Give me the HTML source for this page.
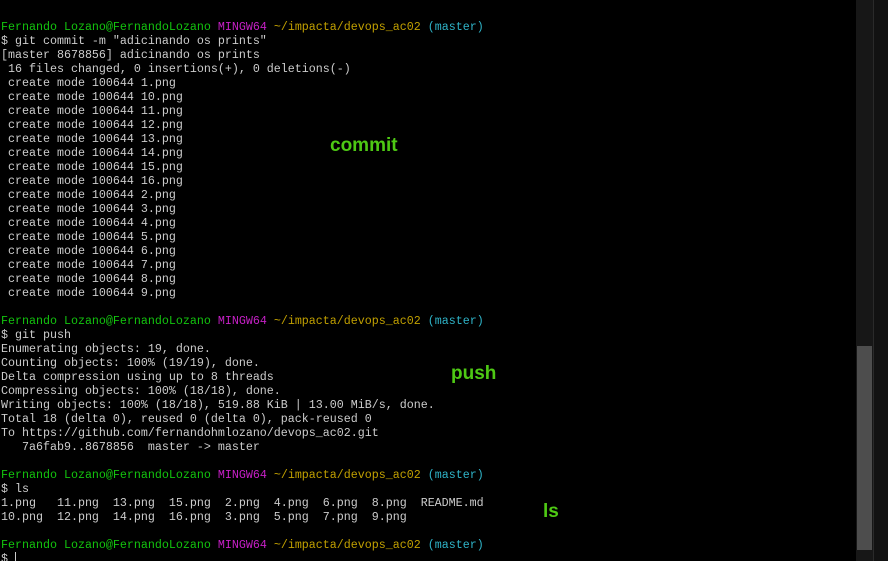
<!DOCTYPE html>
<html><head><meta charset="utf-8"><style>
html,body{margin:0;padding:0;background:#000;width:888px;height:561px;overflow:hidden;position:relative}
pre{position:absolute;left:1px;top:20px;margin:0;font-family:"Liberation Mono",monospace;font-size:11.67px;line-height:14px;color:#cccccc;white-space:pre}
.g{color:#13c40e}.m{color:#c620c6}.y{color:#c1a000}.c{color:#2fb4c8}
.lbl{position:absolute;font-family:"Liberation Sans",sans-serif;font-weight:bold;font-size:19px;color:#4ec914}
.sb{position:absolute;left:856px;top:0;width:17px;height:561px;background:#171717}
.th{position:absolute;left:857px;top:346px;width:15px;height:204px;background:#4d4d4d}
.rs{position:absolute;left:873px;top:0;width:1px;height:561px;background:#2a2a2a}
.rr{position:absolute;left:874px;top:0;width:14px;height:561px;background:#121212}
</style></head><body>
<pre><span class="g">Fernando Lozano@FernandoLozano</span> <span class="m">MINGW64</span> <span class="y">~/impacta/devops_ac02</span> <span class="c">(master)</span>
$ git commit -m "adicinando os prints"
[master 8678856] adicinando os prints
 16 files changed, 0 insertions(+), 0 deletions(-)
 create mode 100644 1.png
 create mode 100644 10.png
 create mode 100644 11.png
 create mode 100644 12.png
 create mode 100644 13.png
 create mode 100644 14.png
 create mode 100644 15.png
 create mode 100644 16.png
 create mode 100644 2.png
 create mode 100644 3.png
 create mode 100644 4.png
 create mode 100644 5.png
 create mode 100644 6.png
 create mode 100644 7.png
 create mode 100644 8.png
 create mode 100644 9.png

<span class="g">Fernando Lozano@FernandoLozano</span> <span class="m">MINGW64</span> <span class="y">~/impacta/devops_ac02</span> <span class="c">(master)</span>
$ git push
Enumerating objects: 19, done.
Counting objects: 100% (19/19), done.
Delta compression using up to 8 threads
Compressing objects: 100% (18/18), done.
Writing objects: 100% (18/18), 519.88 KiB | 13.00 MiB/s, done.
Total 18 (delta 0), reused 0 (delta 0), pack-reused 0
To https://github.com/fernandohmlozano/devops_ac02.git
   7a6fab9..8678856  master -&gt; master

<span class="g">Fernando Lozano@FernandoLozano</span> <span class="m">MINGW64</span> <span class="y">~/impacta/devops_ac02</span> <span class="c">(master)</span>
$ ls
1.png   11.png  13.png  15.png  2.png  4.png  6.png  8.png  README.md
10.png  12.png  14.png  16.png  3.png  5.png  7.png  9.png

<span class="g">Fernando Lozano@FernandoLozano</span> <span class="m">MINGW64</span> <span class="y">~/impacta/devops_ac02</span> <span class="c">(master)</span>
$ <span style="border-left:1px solid #ccc"></span></pre>
<div class="lbl" style="left:330px;top:135px">commit</div>
<div class="lbl" style="left:451px;top:363px">push</div>
<div class="lbl" style="left:543px;top:501px">ls</div>
<div class="sb"></div><div class="th"></div><div class="rs"></div><div class="rr"></div>
</body></html>
